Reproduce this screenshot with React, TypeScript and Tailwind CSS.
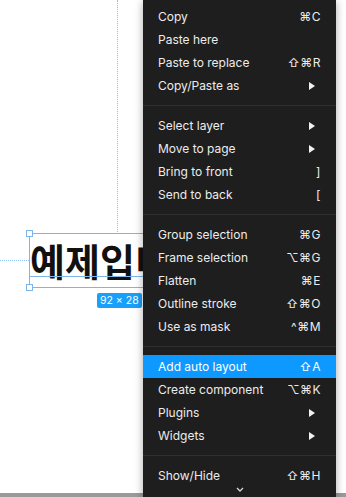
type Item = { label: string; shortcut?: string; sub?: boolean; active?: boolean };

const groups: Item[][] = [
  [
    { label: "Copy", shortcut: "⌘C" },
    { label: "Paste here" },
    { label: "Paste to replace", shortcut: "⇧⌘R" },
    { label: "Copy/Paste as", sub: true },
  ],
  [
    { label: "Select layer", sub: true },
    { label: "Move to page", sub: true },
    { label: "Bring to front", shortcut: "]" },
    { label: "Send to back", shortcut: "[" },
  ],
  [
    { label: "Group selection", shortcut: "⌘G" },
    { label: "Frame selection", shortcut: "⌥⌘G" },
    { label: "Flatten", shortcut: "⌘E" },
    { label: "Outline stroke", shortcut: "⇧⌘O" },
    { label: "Use as mask", shortcut: "^⌘M" },
  ],
  [
    { label: "Add auto layout", shortcut: "⇧A", active: true },
    { label: "Create component", shortcut: "⌥⌘K" },
    { label: "Plugins", sub: true },
    { label: "Widgets", sub: true },
  ],
  [{ label: "Show/Hide", shortcut: "⇧⌘H" }],
];

const MenuRow = ({ item }: { item: Item }) => (
  <div
    className={`h-[23px] flex items-center justify-between pl-[15px] pr-[15px] text-[12px] text-[#ececec] ${
      item.active ? "bg-[#0d99ff] text-white" : ""
    }`}
  >
    <span>{item.label}</span>
    {item.shortcut && <span className="tracking-[0.5px]">{item.shortcut}</span>}
    {item.sub && (
      <svg width="6" height="8" viewBox="0 0 6 8" className="mr-[6px]">
        <path d="M0 0 L6 4 L0 8 Z" fill="#f2f2f2" />
      </svg>
    )}
  </div>
);

export default function App() {
  return (
    <div className="relative w-[346px] h-[497px] bg-white overflow-hidden font-['Inter','Liberation_Sans',sans-serif]">
      {/* canvas guides */}
      <div className="absolute left-[117px] top-0 h-[232px] border-l border-dotted border-[#8fbff0]" />
      <div className="absolute left-0 top-[260px] w-[29px] border-t border-dotted border-[#8fbff0]" />

      {/* selected text layer, runs on under the menu */}
      <div className="absolute left-[29px] top-[233px] w-[116px] h-[55px] border border-[#7ab6ec]">
        <div className="absolute inset-0 overflow-hidden">
          <div className="pt-[5px] text-[38px] leading-[42px] font-bold text-[#111] whitespace-nowrap font-['Noto_Sans_CJK_KR',sans-serif]">
            예제입니다
          </div>
        </div>
        <div className="absolute left-0 right-0 top-[42px] border-t border-[#7ab6ec]" />
        <div className="absolute -left-[4px] -top-[4px] w-[7px] h-[7px] bg-white border border-[#7ab6ec]" />
        <div className="absolute -left-[4px] -bottom-[4px] w-[7px] h-[7px] bg-white border border-[#7ab6ec]" />
      </div>
      <div className="absolute left-[97px] top-[293px] h-[15px] px-[3px] rounded-[2px] bg-[#18a0fb] text-white text-[10.5px] leading-[15px]">
        92 × 28
      </div>

      <div className="absolute left-0 right-0 bottom-0 h-[4px] bg-[#9a9a9a]" />

      {/* context menu */}
      <div className="absolute left-[143px] top-0 bottom-0 w-[193px] bg-[#1e1e1e] pt-[5px] shadow-[0_2px_8px_rgba(0,0,0,0.35)]">
        {groups.map((g, i) => (
          <div key={i}>
            {i > 0 && <div className="my-[8px] h-px bg-[#2f2f2f]" />}
            {g.map((item) => (
              <MenuRow key={item.label} item={item} />
            ))}
          </div>
        ))}
        <div className="flex justify-center">
          <svg width="8" height="5" viewBox="0 0 8 5">
            <path d="M1 1 L4 4 L7 1" stroke="#d8d8d8" strokeWidth="1.3" fill="none" />
          </svg>
        </div>
      </div>
    </div>
  );
}
